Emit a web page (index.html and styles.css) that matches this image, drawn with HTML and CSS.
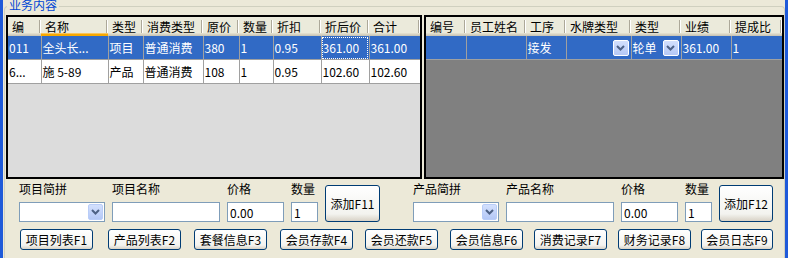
FILE: index.html
```html
<!DOCTYPE html>
<html lang="zh-CN">
<head>
  <meta charset="UTF-8">
  <title>业务内容</title>
  <link rel="stylesheet" href="styles.css">
</head>
<body>
  <div class="window">
    <div class="group">
      <span class="group-title">业务内容</span>

      <div class="grids">
        <div class="grid grid-items">
          <table>
            <colgroup>
              <col style="width:33px"><col style="width:67px"><col style="width:35px">
              <col style="width:60px"><col style="width:36px"><col style="width:34px">
              <col style="width:48px"><col style="width:48px"><col style="width:51px">
            </colgroup>
            <thead>
              <tr>
                <th>编</th><th class="hot">名称</th><th>类型</th><th>消费类型</th><th>原价</th>
                <th>数量</th><th>折扣</th><th>折后价</th><th>合计</th>
              </tr>
            </thead>
            <tbody>
              <tr class="selected">
                <td>011</td><td>全头长...</td><td>项目</td><td>普通消费</td><td>380</td>
                <td>1</td><td>0.95</td><td class="focus">361.00</td><td>361.00</td>
              </tr>
              <tr>
                <td>6...</td><td>施 5-89</td><td>产品</td><td>普通消费</td><td>108</td>
                <td>1</td><td>0.95</td><td>102.60</td><td>102.60</td>
              </tr>
            </tbody>
          </table>
        </div>

        <div class="grid grid-staff">
          <table>
            <colgroup>
              <col style="width:40px"><col style="width:60px"><col style="width:40px">
              <col style="width:65px"><col style="width:50px"><col style="width:50px">
              <col style="width:51px">
            </colgroup>
            <thead>
              <tr>
                <th>编号</th><th>员工姓名</th><th>工序</th><th>水牌类型</th><th>类型</th>
                <th>业绩</th><th>提成比</th>
              </tr>
            </thead>
            <tbody>
              <tr class="selected">
                <td></td><td></td><td>接发</td>
                <td><div class="cell-combo"><span></span><span class="drop small"><svg width="9" height="6" viewBox="0 0 9 6"><polyline points="1,1 4.5,4.5 8,1" fill="none" stroke="#4d6185" stroke-width="2"/></svg></span></div></td>
                <td><div class="cell-combo"><span>轮单</span><span class="drop small"><svg width="9" height="6" viewBox="0 0 9 6"><polyline points="1,1 4.5,4.5 8,1" fill="none" stroke="#4d6185" stroke-width="2"/></svg></span></div></td>
                <td>361.00</td><td>1</td>
              </tr>
            </tbody>
          </table>
        </div>
      </div>

      <div class="entry">
        <div class="entry-side entry-left">
          <div class="field w-combo">
            <label>项目简拼</label>
            <div class="combo"><span class="drop"><svg width="9" height="6" viewBox="0 0 9 6"><polyline points="1,1 4.5,4.5 8,1" fill="none" stroke="#4d6185" stroke-width="2"/></svg></span></div>
          </div>
          <div class="field w-name">
            <label>项目名称</label>
            <input type="text" value="">
          </div>
          <div class="field w-price">
            <label>价格</label>
            <input type="text" value="0.00">
          </div>
          <div class="field w-qty">
            <label>数量</label>
            <input type="text" value="1">
          </div>
          <button class="btn add add-left">添加F11</button>
        </div>

        <div class="entry-side entry-right">
          <div class="field w-combo">
            <label>产品简拼</label>
            <div class="combo"><span class="drop"><svg width="9" height="6" viewBox="0 0 9 6"><polyline points="1,1 4.5,4.5 8,1" fill="none" stroke="#4d6185" stroke-width="2"/></svg></span></div>
          </div>
          <div class="field w-name">
            <label>产品名称</label>
            <input type="text" value="">
          </div>
          <div class="field w-price">
            <label>价格</label>
            <input type="text" value="0.00">
          </div>
          <div class="field w-qty">
            <label>数量</label>
            <input type="text" value="1">
          </div>
          <button class="btn add add-right">添加F12</button>
        </div>
      </div>

      <div class="shortcuts">
        <button class="btn">项目列表F1</button>
        <button class="btn">产品列表F2</button>
        <button class="btn">套餐信息F3</button>
        <button class="btn">会员存款F4</button>
        <button class="btn">会员还款F5</button>
        <button class="btn">会员信息F6</button>
        <button class="btn">消费记录F7</button>
        <button class="btn">财务记录F8</button>
        <button class="btn last">会员日志F9</button>
      </div>
    </div>
  </div>
</body>
</html>
```

FILE: styles.css
```css
html, body {
  margin: 0;
  height: 258px;
  overflow: hidden;
}
body {
  background: #ece9d8;
  font-family: "Noto Sans CJK SC", "Liberation Sans", sans-serif;
  font-size: 12px;
  color: #000;
}
.window {
  height: 258px;
  box-sizing: border-box;
  overflow: hidden;
  border-left: 3px solid #1f5ad9;
  border-right: 3px solid #1f5ad9;
}
.group {
  position: relative;
  box-sizing: border-box;
  height: 252px;
  margin: 6px 0 0 1px;
  padding: 8px 0 0 1px;
  border: 1px solid #d0d0bf;
  border-bottom: none;
  border-radius: 4px 4px 0 0;
}
.group-title {
  position: absolute;
  top: -8px;
  left: 2px;
  padding: 0 2px;
  line-height: 12px;
  color: #0046d5;
  background: #ece9d8;
}

/* grids */
.grids {
  display: flex;
  gap: 2px;
  height: 164px;
}
.grid {
  box-sizing: border-box;
  height: 164px;
  border: 2px solid #000;
  overflow: hidden;
}
.grid-items {
  width: 416px;
  background: #dcdcdc;
}
.grid-staff {
  width: 360px;
  background: #808080;
}
table {
  border-collapse: collapse;
  table-layout: fixed;
}
.grid-items table { width: 412px; }
.grid-staff table { width: 356px; }
th {
  height: 19px;
  padding: 0 0 0 4px;
  text-align: left;
  font-weight: normal;
  white-space: nowrap;
  overflow: hidden;
  background:
    linear-gradient(#aca899, #aca899) right 1px center / 1px 13px no-repeat,
    linear-gradient(#fff, #fff) right 0 center / 1px 13px no-repeat,
    #ebeadb;
  box-shadow: inset 0 -1px #cbc7b8, inset 0 -2px #d6d2c2, inset 0 -3px #e2decd;
}
th.hot {
  box-shadow: inset 0 -2px #f8a900, inset 0 -3px #fbc45a;
}
td {
  height: 23px;
  padding: 0 1px;
  white-space: nowrap;
  overflow: hidden;
  background: #fff;
  border-right: 1px solid #a0a0a0;
  border-bottom: 1px solid #a0a0a0;
}
tr.selected td {
  background: #316ac5;
  color: #fff;
}
td.focus {
  outline: 1px dotted #fff;
  outline-offset: -2px;
}
.cell-combo {
  display: flex;
  justify-content: space-between;
  align-items: center;
  padding-right: 1px;
}

/* dropdown button */
.drop {
  display: flex;
  align-items: center;
  justify-content: center;
  width: 15px;
  height: 100%;
  box-sizing: border-box;
  border: 1px solid #b9cdf8;
  border-radius: 2px;
  background: linear-gradient(#d3e0fd, #b4c8f6);
}
.drop.small {
  width: 16px;
  height: 16px;
  border-color: #fff;
}

/* entry fields */
.entry {
  display: flex;
  margin-top: 2px;
}
.entry-side {
  display: flex;
  gap: 7px;
}
.entry-left { padding-left: 13px; }
.entry-right { margin-left: 33px; }
.field label {
  display: block;
  line-height: 16px;
  margin-bottom: 5px;
  white-space: nowrap;
}
.field input,
.combo {
  display: block;
  box-sizing: border-box;
  width: 100%;
  height: 20px;
  margin: 0;
  padding: 0 2px;
  border: 1px solid #7f9db9;
  background: #fff;
  font: inherit;
  color: #000;
}
.combo {
  display: flex;
  justify-content: flex-end;
  padding: 1px;
}
.w-combo { width: 86px; }
.w-name { width: 108px; }
.w-price { width: 57px; }
.w-qty { width: 27px; }

/* buttons */
.btn {
  box-sizing: border-box;
  width: 73px;
  height: 21px;
  padding: 0;
  border: 1px solid #003c74;
  border-radius: 3px;
  background: linear-gradient(#ffffff, #f3f3ef 80%, #d8d2c6);
  font: inherit;
  color: #000;
  white-space: nowrap;
}
.add {
  align-self: flex-end;
  height: 37px;
}
.add-left { width: 55px; }
.add-right { width: 54px; }
.shortcuts {
  display: grid;
  grid-template-columns: 88px 86px 86px 85px 85px 84px 84px 83px 73px;
  margin-top: 7px;
  padding-left: 14px;
}
.shortcuts .last { width: 72px; }
```
